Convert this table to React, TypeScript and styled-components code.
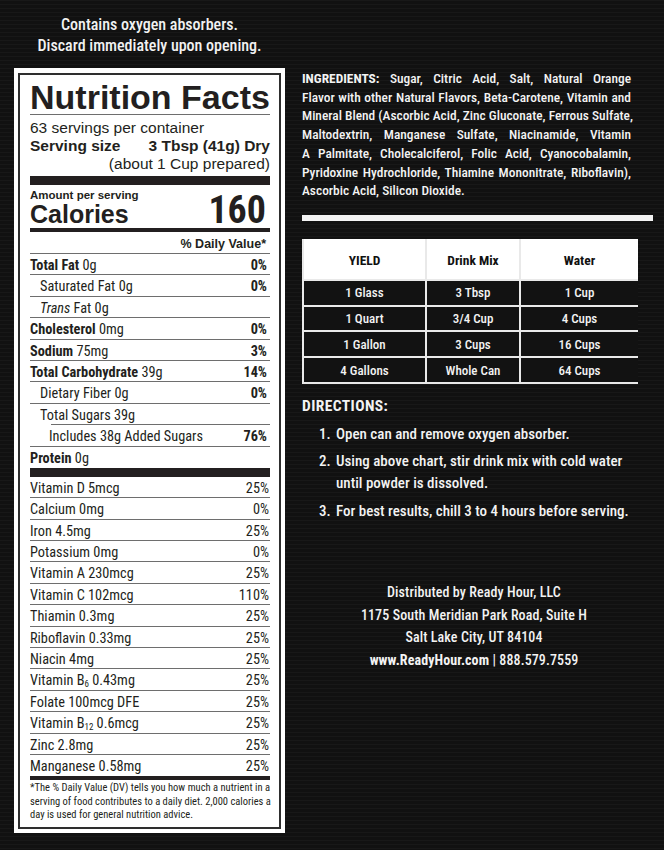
import React from "react";
import styled, { createGlobalStyle, css } from "styled-components";

const COND = css`
  font-family: "Roboto Condensed", Roboto, "Liberation Sans", Arial, sans-serif;
  font-stretch: 75%;
`;
const SANS = `"Liberation Sans", Arial, Helvetica, sans-serif`;
const INK = "#231f20";
const RULE = "#6e6e6e";

const Global = createGlobalStyle`
  html, body { margin: 0; padding: 0; height: 100%; }
  body {
    background-color: #111111;
    background-image: repeating-linear-gradient(
      180deg,
      rgba(255,255,255,0.03) 0px,
      rgba(255,255,255,0.03) 1px,
      rgba(0,0,0,0) 1px,
      rgba(0,0,0,0) 4px
    );
  }
`;

const Page = styled.div`
  display: grid;
  grid-template-columns: 271px 351px;
  grid-template-rows: auto auto;
  align-content: start;
  column-gap: 17px;
  padding: 15px 0 0 14px;
  width: 664px;
  height: 850px;
  box-sizing: border-box;
`;

const Warning = styled.div`
  grid-column: 1;
  grid-row: 1;
  ${COND};
  font-weight: 500;
  font-size: 16px;
  line-height: 20.5px;
  color: #f2f2f2;
  text-align: center;
  margin-bottom: 12px;
`;

const Label = styled.div`
  grid-column: 1;
  grid-row: 2;
  align-self: start;
  background: #fff;
  padding: 5px 4px 4px;
`;

const LabelInner = styled.div`
  border: 2px solid #2e2e2e;
  padding: 0 9px 0 10px;
  color: ${INK};
`;

const Title = styled.div`
  font-family: ${SANS};
  font-weight: 700;
  font-size: 34px;
  line-height: 34px;
  margin-top: 5px;
  border-bottom: 1px solid ${RULE};
  white-space: nowrap;
`;

const ServingBlock = styled.div`
  margin-top: 4px;
  font-family: ${SANS};
  font-size: 15.5px;
  line-height: 18px;
`;

const ServingLine = styled.div`
  display: flex;
  justify-content: space-between;
  font-weight: 700;
`;

const PreparedLine = styled.div`
  text-align: right;
`;

const Bar = styled.div<{ $h: number; $mt?: number }>`
  height: ${(p) => p.$h}px;
  margin-top: ${(p) => p.$mt ?? 0}px;
  background: ${INK};
`;

const AmountLine = styled.div`
  font-family: ${SANS};
  font-weight: 700;
  font-size: 11.5px;
  line-height: 12px;
  margin-top: 4px;
`;

const CaloriesRow = styled.div`
  display: flex;
  justify-content: space-between;
  align-items: baseline;
  padding-bottom: 1px;
`;

const CaloriesLabel = styled.span`
  font-family: ${SANS};
  font-weight: 700;
  font-size: 25px;
  line-height: 26px;
`;

const CaloriesValue = styled.span`
  ${COND};
  font-weight: 700;
  font-size: 38px;
  line-height: 16px;
  padding-right: 4px;
`;

const DVRow = styled.div`
  text-align: right;
  font-family: ${SANS};
  font-weight: 700;
  font-size: 12.5px;
  line-height: 14px;
  padding: 5px 4px 2px 0;
  border-bottom: 1px solid ${RULE};
`;

const NutrientRow = styled.div<{ $indent?: number; $lineInset?: number; $noLine?: boolean }>`
  display: flex;
  justify-content: space-between;
  box-sizing: border-box;
  height: 21.4px;
  padding-top: 3px;
  padding-left: ${(p) => p.$indent ?? 0}px;
  ${COND};
  font-size: 14.3px;
  line-height: 17.4px;
  white-space: nowrap;
  background-image: ${(p) =>
    p.$noLine ? "none" : `linear-gradient(${RULE}, ${RULE})`};
  background-repeat: no-repeat;
  background-position: right bottom;
  background-size: calc(100% - ${(p) => p.$lineInset ?? 0}px) 1px;
`;

const Bold = styled.b`
  font-weight: 700;
`;

const Ital = styled.i`
  font-style: italic;
`;

const Percent = styled.span<{ $bold?: boolean }>`
  font-weight: ${(p) => (p.$bold ? 700 : 400)};
  padding-right: ${(p) => (p.$bold ? 3 : 1)}px;
`;

const Sub = styled.sub`
  font-size: 9px;
  line-height: 0;
  vertical-align: -2px;
`;

const Footnote = styled.div`
  margin-top: 1px;
  padding-bottom: 5px;
  ${COND};
  font-size: 10.5px;
  line-height: 13.5px;
`;

const JustLine = styled.span<{ $last?: boolean }>`
  display: block;
  text-align: justify;
  text-align-last: ${(p) => (p.$last ? "left" : "justify")};
  white-space: nowrap;
`;

/* Right column */

const Right = styled.div`
  grid-column: 2;
  grid-row: 2;
  margin-top: 2px;
  color: #f3f3f3;
  ${COND};
  font-weight: 500;
`;

const Ingredients = styled.div`
  width: 329px;
  font-size: 13.4px;
  line-height: 18.7px;
`;

const WhiteRule = styled.div`
  height: 6px;
  margin-top: 14px;
  background: #f3f3f3;
`;

const YieldTable = styled.div`
  margin-top: 18px;
  width: 336px;
  box-sizing: border-box;
  display: grid;
  grid-template-columns: 121px 92px 117px;
  grid-template-rows: 40px repeat(4, 23.75px);
  gap: 2px;
  padding: 0 2px 2px;
  background: #e9e9e9;
`;

const HeadCell = styled.div`
  background: #fff;
  color: #111;
  font-weight: 700;
  font-size: 13.5px;
  display: flex;
  align-items: center;
  justify-content: center;
  padding-top: 2px;
`;

const Cell = styled.div`
  background: #121212;
  color: #f3f3f3;
  font-size: 13px;
  display: flex;
  align-items: center;
  justify-content: center;
`;

const DirHeading = styled.div`
  margin-top: 12.5px;
  font-weight: 700;
  font-size: 15.5px;
  line-height: 20px;
  letter-spacing: 0.4px;
`;

const DirList = styled.ol`
  list-style: none;
  margin: 6.5px 0 0;
  padding: 0 0 0 17px;
  display: flex;
  flex-direction: column;
  gap: 5.5px;
  font-size: 15px;
  line-height: 22px;
`;

const DirItem = styled.li`
  display: grid;
  grid-template-columns: 17px 1fr;
  white-space: nowrap;
`;

const Distributor = styled.div`
  margin-top: 59.5px;
  width: 344px;
  text-align: center;
  font-size: 14px;
  line-height: 22.4px;
  letter-spacing: 0.1px;
`;

type N = { label: React.ReactNode; pct?: string; indent?: number; lineInset?: number; noLine?: boolean };

const macros: N[] = [
  { label: <><Bold>Total Fat</Bold> 0g</>, pct: "0%" },
  { label: <>Saturated Fat 0g</>, pct: "0%", indent: 10 },
  { label: <><Ital>Trans</Ital> Fat 0g</>, indent: 10 },
  { label: <><Bold>Cholesterol</Bold> 0mg</>, pct: "0%" },
  { label: <><Bold>Sodium</Bold> 75mg</>, pct: "3%" },
  { label: <><Bold>Total Carbohydrate</Bold> 39g</>, pct: "14%" },
  { label: <>Dietary Fiber 0g</>, pct: "0%", indent: 10 },
  { label: <>Total Sugars 39g</>, indent: 10, lineInset: 21 },
  { label: <>Includes 38g Added Sugars</>, pct: "76%", indent: 19 },
  { label: <><Bold>Protein</Bold> 0g</>, noLine: true },
];

const vitamins: [React.ReactNode, string][] = [
  ["Vitamin D 5mcg", "25%"],
  ["Calcium 0mg", "0%"],
  ["Iron 4.5mg", "25%"],
  ["Potassium 0mg", "0%"],
  ["Vitamin A 230mcg", "25%"],
  ["Vitamin C 102mcg", "110%"],
  ["Thiamin 0.3mg", "25%"],
  ["Riboflavin 0.33mg", "25%"],
  ["Niacin 4mg", "25%"],
  [<>Vitamin B<Sub>6</Sub> 0.43mg</>, "25%"],
  ["Folate 100mcg DFE", "25%"],
  [<>Vitamin B<Sub>12</Sub> 0.6mcg</>, "25%"],
  ["Zinc 2.8mg", "25%"],
  ["Manganese 0.58mg", "25%"],
];

const ingredientLines: React.ReactNode[] = [
  <><Bold>INGREDIENTS:</Bold> Sugar, Citric Acid, Salt, Natural Orange</>,
  "Flavor with other Natural Flavors, Beta-Carotene, Vitamin and",
  "Mineral Blend (Ascorbic Acid, Zinc Gluconate, Ferrous Sulfate,",
  "Maltodextrin, Manganese Sulfate, Niacinamide, Vitamin",
  "A Palmitate, Cholecalciferol, Folic Acid, Cyanocobalamin,",
  "Pyridoxine Hydrochloride, Thiamine Mononitrate, Riboflavin),",
  "Ascorbic Acid, Silicon Dioxide.",
];

const footLines = [
  "*The % Daily Value (DV) tells you how much a nutrient in a",
  "serving of food contributes to a daily diet. 2,000 calories a",
  "day is used for general nutrition advice.",
];

const yieldRows = [
  ["1 Glass", "3 Tbsp", "1 Cup"],
  ["1 Quart", "3/4 Cup", "4 Cups"],
  ["1 Gallon", "3 Cups", "16 Cups"],
  ["4 Gallons", "Whole Can", "64 Cups"],
];

export default function App() {
  return (
    <>
      <Global />
      <Page>
        <Warning>
          Contains oxygen absorbers.
          <br />
          Discard immediately upon opening.
        </Warning>

        <Label>
          <LabelInner>
            <Title>Nutrition Facts</Title>
            <ServingBlock>
              <div>63 servings per container</div>
              <ServingLine>
                <span>Serving size</span>
                <span>3 Tbsp (41g) Dry</span>
              </ServingLine>
              <PreparedLine>(about 1 Cup prepared)</PreparedLine>
            </ServingBlock>
            <Bar $h={9} $mt={3} />
            <AmountLine>Amount per serving</AmountLine>
            <CaloriesRow>
              <CaloriesLabel>Calories</CaloriesLabel>
              <CaloriesValue>160</CaloriesValue>
            </CaloriesRow>
            <Bar $h={4} />
            <DVRow>% Daily Value*</DVRow>
            {macros.map((m, i) => (
              <NutrientRow key={i} $indent={m.indent} $lineInset={m.lineInset} $noLine={m.noLine}>
                <span>{m.label}</span>
                {m.pct && <Percent $bold>{m.pct}</Percent>}
              </NutrientRow>
            ))}
            <Bar $h={9} />
            {vitamins.map(([l, p], i) => (
              <NutrientRow key={i} $noLine={i === vitamins.length - 1}>
                <span>{l}</span>
                <Percent>{p}</Percent>
              </NutrientRow>
            ))}
            <Bar $h={4} />
            <Footnote>
              {footLines.map((t, i) => (
                <JustLine key={i} $last={i === footLines.length - 1}>
                  {t}
                </JustLine>
              ))}
            </Footnote>
          </LabelInner>
        </Label>

        <Right>
          <Ingredients>
            {ingredientLines.map((t, i) => (
              <JustLine key={i} $last={i === ingredientLines.length - 1}>
                {t}
              </JustLine>
            ))}
          </Ingredients>
          <WhiteRule />
          <YieldTable>
            <HeadCell>YIELD</HeadCell>
            <HeadCell>Drink Mix</HeadCell>
            <HeadCell>Water</HeadCell>
            {yieldRows.flat().map((c, i) => (
              <Cell key={i}>{c}</Cell>
            ))}
          </YieldTable>
          <DirHeading>DIRECTIONS:</DirHeading>
          <DirList>
            <DirItem>
              <span>1.</span>
              <span>Open can and remove oxygen absorber.</span>
            </DirItem>
            <DirItem>
              <span>2.</span>
              <span>
                Using above chart, stir drink mix with cold water
                <br />
                until powder is dissolved.
              </span>
            </DirItem>
            <DirItem>
              <span>3.</span>
              <span>For best results, chill 3 to 4 hours before serving.</span>
            </DirItem>
          </DirList>
          <Distributor>
            Distributed by Ready Hour, LLC
            <br />
            1175 South Meridian Park Road, Suite H
            <br />
            Salt Lake City, UT 84104
            <br />
            <Bold>www.ReadyHour.com</Bold> | 888.579.7559
          </Distributor>
        </Right>
      </Page>
    </>
  );
}
